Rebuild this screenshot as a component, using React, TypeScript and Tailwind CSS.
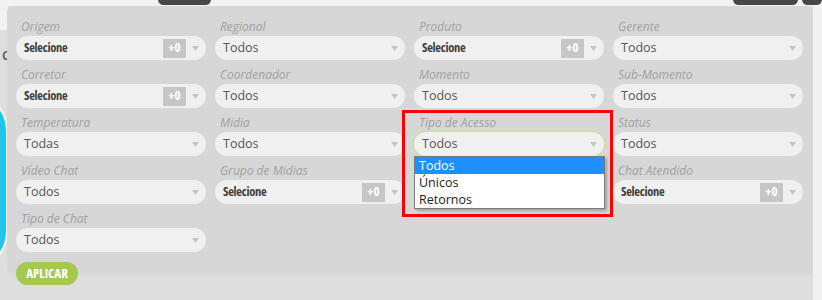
import React from 'react';

interface FilterField {
  label: string;
  value: string;
  multi?: boolean;
}

// null = cell hidden under the open dropdown
const fields: (FilterField | null)[] = [
  { label: 'Origem', value: 'Selecione', multi: true },
  { label: 'Regional', value: 'Todos' },
  { label: 'Produto', value: 'Selecione', multi: true },
  { label: 'Gerente', value: 'Todos' },
  { label: 'Corretor', value: 'Selecione', multi: true },
  { label: 'Coordenador', value: 'Todos' },
  { label: 'Momento', value: 'Todos' },
  { label: 'Sub-Momento', value: 'Todos' },
  { label: 'Temperatura', value: 'Todas' },
  { label: 'Midia', value: 'Todos' },
  { label: 'Tipo de Acesso', value: 'Todos' },
  { label: 'Status', value: 'Todos' },
  { label: 'Vídeo Chat', value: 'Todos' },
  { label: 'Grupo de Midias', value: 'Selecione', multi: true },
  null,
  { label: 'Chat Atendido', value: 'Selecione', multi: true },
  { label: 'Tipo de Chat', value: 'Todos' },
];

const accessOptions = ['Todos', 'Únicos', 'Retornos'];

const Arrow = () => (
  <svg width="7" height="5" viewBox="0 0 7 5" className="shrink-0">
    <path d="M0 0 L7 0 L3.5 5 Z" fill="#c4c4c4" />
  </svg>
);

const SelectBox: React.FC<{ field: FilterField; focused?: boolean }> = ({ field, focused }) => (
  <div
    className={`flex h-6 items-center rounded-full bg-[#f0f0f0] pl-2 pr-[7px] ${
      focused ? 'shadow-[0_0_0_1.5px_#cddca8,0_0_3px_1px_#d8e4b8]' : ''
    }`}
  >
    {field.multi ? (
      <span className="flex-1 text-[12.5px] font-bold font-stretch-condensed tracking-[-0.3px] text-[#3d3d3d]">
        {field.value}
      </span>
    ) : (
      <span className="flex-1 text-[12.5px] text-[#555]">{field.value}</span>
    )}
    {field.multi && (
      <span className="mr-[6px] flex h-[19px] w-[23px] items-center justify-center bg-[#c6c6c6] text-[13px] font-bold font-stretch-condensed text-white">
        +0
      </span>
    )}
    <Arrow />
  </div>
);

export default function App() {
  return (
    <div
      className="relative h-[300px] w-[822px] overflow-hidden bg-[#dedede]"
      style={{ fontFamily: '"Open Sans", "Noto Sans", sans-serif' }}
    >
      {/* page behind the filter panel */}
      <div className="absolute left-0 top-0 h-[6px] w-full bg-[#f2f2f2]" />
      <div className="absolute left-0 top-0 h-[30px] w-[8px] bg-[#f2f2f2]" />
      <div className="absolute right-0 top-0 h-full w-[9px] bg-[#f1f1f1]" />
      <div className="absolute left-[158px] top-[-6px] h-[11px] w-[53px] rounded-full bg-[#474747]" />
      <div className="absolute left-[733px] top-[-6px] h-[11px] w-[65px] rounded-full bg-[#474747]" />
      <div className="absolute left-[802px] top-[-6px] h-[11px] w-[20px] rounded-full bg-[#474747]" />
      <span className="absolute left-[2px] top-[46px] text-[13px] font-semibold text-[#555]">C</span>
      <div className="absolute left-[-110px] top-[91px] h-[180px] w-[118px] rounded-[40px] border-2 border-white bg-[#21c4ea]" />

      {/* filter panel */}
      <div className="relative ml-[7px] mt-[6px] h-[269px] w-[806px] rounded-md bg-[#d7d7d7] pl-[9px] pt-3">
        <div className="grid w-[787px] grid-cols-4 gap-x-[9px] gap-y-[6px]">
          {fields.map((f, idx) => {
            if (!f) return <div key={idx} />;
            const isAccess = f.label === 'Tipo de Acesso';
            return (
              <div key={f.label} className="relative">
                <div className="pl-[5px] text-[12px] italic leading-[18px] text-[#a0a0a0]">{f.label}</div>
                <SelectBox field={f} focused={isAccess} />
                {isAccess && (
                  <div className="absolute left-0 top-full z-10 w-[191px] border border-[#7a7a7a] bg-white shadow-[2px_2px_3px_rgba(0,0,0,0.25)]">
                    {accessOptions.map((o, i) => (
                      <div
                        key={o}
                        className={`h-[17px] pl-1 text-[12.5px] leading-[17px] ${
                          i === 0 ? 'bg-[#1e90ff] text-white' : 'text-[#222]'
                        }`}
                      >
                        {o}
                      </div>
                    ))}
                  </div>
                )}
              </div>
            );
          })}
        </div>
        <button className="mt-[10px] flex h-[23px] w-[62px] items-center justify-center rounded-full bg-[#a6c84e] text-[13px] font-bold font-stretch-condensed text-white">
          APLICAR
        </button>
      </div>

      {/* highlight marker */}
      <div className="absolute left-[402px] top-[110px] z-20 h-[107px] w-[211px] border-[3px] border-[#ff0000]" />
    </div>
  );
}
